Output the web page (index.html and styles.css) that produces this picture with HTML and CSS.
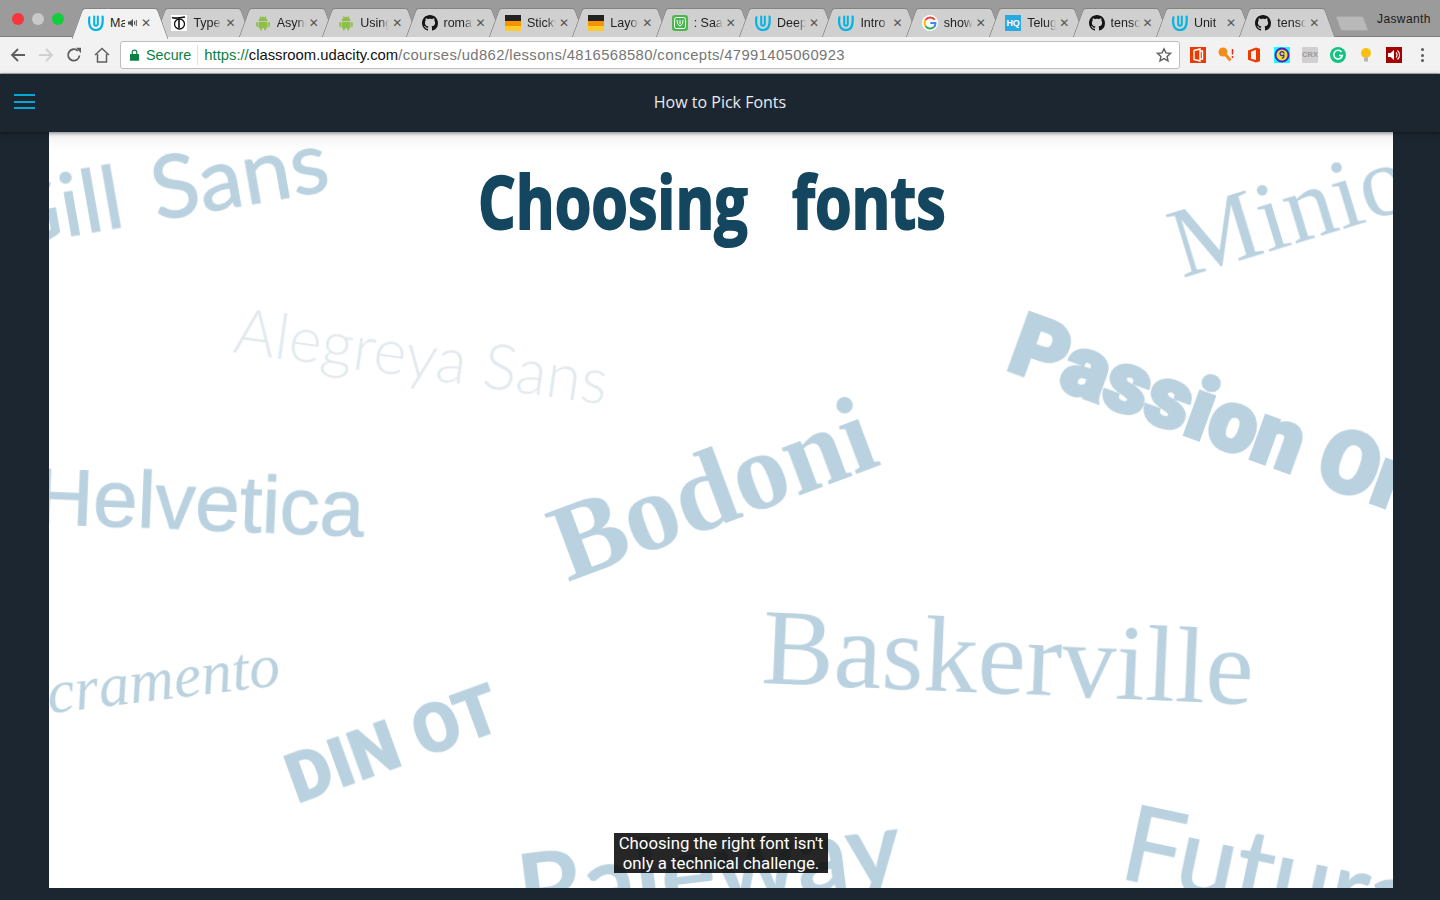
FILE: index.html
```html
<!DOCTYPE html>
<html lang="en">
<head>
  <meta charset="UTF-8">
  <title>How to Pick Fonts</title>
  <link rel="stylesheet" href="styles.css">
</head>
<body>
  <svg class="defs" width="0" height="0">
    <symbol id="udacity" viewBox="0 0 16 16">
      <path d="M1.400 2.400C.4 9 1.800 15 8 15c5.900 0 7.200-5.500 6.600-13.400" fill="none" stroke="#02b3e4" stroke-width="2.200" stroke-linecap="round"/>
      <path d="M6.200 1.400V9c0 2.200 3.400 2.200 3.600 0V1.600" fill="none" stroke="#02b3e4" stroke-width="2" stroke-linecap="round"/>
    </symbol>
    <symbol id="github" viewBox="0 0 16 16">
      <path fill="#161514" d="M8 0C3.580 0 0 3.580 0 8c0 3.540 2.290 6.530 5.470 7.590.4.070.55-.17.55-.38 0-.19-.01-.82-.01-1.490-2.010.37-2.530-.49-2.690-.94-.09-.23-.48-.94-.82-1.130-.28-.15-.68-.52-.01-.53.63-.01 1.080.58 1.230.82.72 1.210 1.870.87 2.330.66.07-.52.28-.87.51-1.070-1.780-.2-3.640-.89-3.640-3.950 0-.87.31-1.590.82-2.150-.08-.2-.36-1.020.08-2.120 0 0 .67-.21 2.200.82.64-.18 1.320-.27 2-.27.68 0 1.360.09 2 .27 1.530-1.040 2.200-.82 2.200-.82.44 1.100.16 1.920.08 2.120.51.56.82 1.270.82 2.150 0 3.070-1.870 3.750-3.650 3.950.29.25.54.73.54 1.480 0 1.070-.01 1.930-.01 2.200 0 .21.15.46.55.38A8.013 8.013 0 0 0 16 8c0-4.420-3.580-8-8-8z"/>
    </symbol>
    <symbol id="android" viewBox="0 0 16 16">
      <g fill="#8ebf4a">
        <path d="M3.500 6.200a4.500 4.500 0 0 1 9 0z"/>
        <rect x="3.500" y="6.900" width="9" height="6.300" rx="1"/>
        <rect x="1.200" y="6.900" width="1.700" height="5" rx=".85"/>
        <rect x="13.100" y="6.900" width="1.700" height="5" rx=".85"/>
        <rect x="5" y="12" width="1.800" height="3.500" rx=".9"/>
        <rect x="9.200" y="12" width="1.800" height="3.500" rx=".9"/>
      </g>
      <path d="M5 .8l1.200 2M11 .8L9.800 2.800" stroke="#8ebf4a" stroke-width=".7"/>
    </symbol>
    <symbol id="stick" viewBox="0 0 16 16">
      <rect width="16" height="6" fill="#222"/>
      <rect y="6" width="16" height="5" fill="#f59300"/>
      <rect y="11" width="16" height="5" fill="#fdcb2e"/>
    </symbol>
  </svg>

  <div class="tabstrip">
    <div class="traffic">
      <span class="light red"></span>
      <span class="light grey"></span>
      <span class="light green"></span>
    </div>
    <div class="tabs">
      <div class="tab active">
        <svg class="favicon"><use href="#udacity"/></svg>
        <span class="title short">Ma</span>
        <svg class="speaker" viewBox="0 0 10 10"><path d="M0 3.500h2L5 1v8L2 6.500H0z" fill="#555"/><path d="M6.500 3.200v3.600M8.300 2v6" stroke="#555" stroke-width="1"/></svg>
        <span class="close">✕</span>
      </div>
      <div class="tab">
        <svg class="favicon" viewBox="0 0 16 16"><rect width="16" height="16" fill="#fff"/><circle cx="8.500" cy="9" r="5" fill="none" stroke="#111" stroke-width="1.300"/><path d="M1 2.500c3 1.500 8 .5 13-.5M8 2v11" stroke="#111" stroke-width="1.600" fill="none"/></svg>
        <span class="title">Type</span>
        <span class="close">✕</span>
      </div>
      <div class="tab">
        <svg class="favicon"><use href="#android"/></svg>
        <span class="title">Async</span>
        <span class="close">✕</span>
      </div>
      <div class="tab">
        <svg class="favicon"><use href="#android"/></svg>
        <span class="title">Using</span>
        <span class="close">✕</span>
      </div>
      <div class="tab">
        <svg class="favicon"><use href="#github"/></svg>
        <span class="title">roman</span>
        <span class="close">✕</span>
      </div>
      <div class="tab">
        <svg class="favicon"><use href="#stick"/></svg>
        <span class="title">Sticky</span>
        <span class="close">✕</span>
      </div>
      <div class="tab">
        <svg class="favicon"><use href="#stick"/></svg>
        <span class="title">Layout</span>
        <span class="close">✕</span>
      </div>
      <div class="tab">
        <svg class="favicon" viewBox="0 0 16 16"><rect width="16" height="16" rx="3" fill="#4cb64f"/><rect x="2.500" y="2.500" width="11" height="11" rx="2" fill="none" stroke="#fff" stroke-width="1"/><path d="M5 5c0 3 1 5 3 6 2-1 3-3 3-6M8 5v4" fill="none" stroke="#fff" stroke-width="1"/></svg>
        <span class="title">: Saavn</span>
        <span class="close">✕</span>
      </div>
      <div class="tab">
        <svg class="favicon"><use href="#udacity"/></svg>
        <span class="title">Deep</span>
        <span class="close">✕</span>
      </div>
      <div class="tab">
        <svg class="favicon"><use href="#udacity"/></svg>
        <span class="title">Intro</span>
        <span class="close">✕</span>
      </div>
      <div class="tab">
        <svg class="favicon" viewBox="0 0 16 16"><circle cx="8" cy="8" r="8" fill="#fff"/><path d="M12.800 4.800A5.600 5.600 0 0 0 3.500 5" fill="none" stroke="#ea4335" stroke-width="2"/><path d="M3.500 5a5.600 5.600 0 0 0 0 6" fill="none" stroke="#fbbc05" stroke-width="2"/><path d="M3.500 11a5.600 5.600 0 0 0 8.500 1" fill="none" stroke="#34a853" stroke-width="2"/><path d="M12 12a5.600 5.600 0 0 0 1.500-4H8.300" fill="none" stroke="#4285f4" stroke-width="2"/></svg>
        <span class="title">show</span>
        <span class="close">✕</span>
      </div>
      <div class="tab">
        <span class="favicon hq">HQ</span>
        <span class="title">Telugu</span>
        <span class="close">✕</span>
      </div>
      <div class="tab">
        <svg class="favicon"><use href="#github"/></svg>
        <span class="title">tensor</span>
        <span class="close">✕</span>
      </div>
      <div class="tab">
        <svg class="favicon"><use href="#udacity"/></svg>
        <span class="title">Unit</span>
        <span class="close">✕</span>
      </div>
      <div class="tab">
        <svg class="favicon"><use href="#github"/></svg>
        <span class="title">tensor</span>
        <span class="close">✕</span>
      </div>
      <div class="newtab"></div>
    </div>
    <div class="profile">Jaswanth</div>
  </div>

  <div class="toolbar">
    <div class="navs">
      <svg class="nav" viewBox="0 0 16 16"><path d="M15 8H2M8 2L2 8l6 6" fill="none" stroke="#5f5f5f" stroke-width="1.800"/></svg>
      <svg class="nav" viewBox="0 0 16 16"><path d="M1 8h13M8 2l6 6-6 6" fill="none" stroke="#cfcfcf" stroke-width="1.800"/></svg>
      <svg class="nav" viewBox="0 0 16 16"><path d="M13.500 8.500A5.700 5.700 0 1 1 11.800 3.800" fill="none" stroke="#5f5f5f" stroke-width="1.800"/><path d="M10 .8h5v5.400z" fill="#5f5f5f"/></svg>
      <svg class="nav" viewBox="0 0 16 16"><path d="M1 8l7-6.500L15 8M3.500 7v8h9V7" fill="none" stroke="#5f5f5f" stroke-width="1.500"/></svg>
    </div>
    <div class="omnibox">
      <svg class="lock" viewBox="0 0 10 13"><path d="M2.500 6V3.500a2.500 2.500 0 0 1 5 0V6" fill="none" stroke="#0b8043" stroke-width="1.300"/><rect y="5.500" width="10" height="7.500" rx=".6" fill="#0b8043"/></svg>
      <span class="secure">Secure</span>
      <span class="url"><span class="scheme">https://</span><span class="host">classroom.udacity.com</span><span class="path">/courses/ud862/lessons/4816568580/concepts/47991405060923</span></span>
      <svg class="star" viewBox="0 0 16 16"><path d="M8 1.800l1.900 4.100 4.500.5-3.300 3 .9 4.400L8 11.600l-4 2.200.9-4.400-3.300-3 4.500-.5z" fill="none" stroke="#5f5f5f" stroke-width="1.400"/></svg>
    </div>
    <div class="extensions">
      <span class="ext"><svg viewBox="0 0 16 16"><rect width="16" height="16" fill="#ea3c00"/><path d="M4 3.500l6-1.500v12l-6-1.500zM10 4h2.500v8H10" fill="none" stroke="#fff" stroke-width="1.400"/></svg></span>
      <span class="ext"><svg viewBox="0 0 16 16"><circle cx="5" cy="5" r="4.500" fill="#f28c1c"/><path d="M7 7l5.500 6.500" stroke="#f28c1c" stroke-width="3"/><path d="M14.500 2v5.500M14.500 9v2" stroke="#d93025" stroke-width="1.500"/></svg></span>
      <span class="ext"><svg viewBox="0 0 16 16"><path d="M2 3.500L10 .5l4 1.200v12.600l-4 1.200-8-2.800zM5 4.800v7l5 1.200V2.800z" fill="#eb3c00" fill-rule="evenodd"/></svg></span>
      <span class="ext"><svg viewBox="0 0 16 16"><rect width="16" height="16" fill="#1ff"/><circle cx="8" cy="8" r="7.500" fill="#4b22c8"/><circle cx="8" cy="8" r="5.500" fill="#e4e22c"/><path d="M10 6.500a2 2 0 1 0-.2 1v2.500L8 11.500" fill="none" stroke="#4b22c8" stroke-width="1.300"/></svg></span>
      <span class="ext crx">CRX</span>
      <span class="ext"><svg viewBox="0 0 16 16"><circle cx="8" cy="8" r="8" fill="#12c384"/><path d="M11.500 5A4.300 4.300 0 1 0 12.300 8.500H9" fill="none" stroke="#fff" stroke-width="1.600"/></svg></span>
      <span class="ext"><svg viewBox="0 0 16 16"><circle cx="8" cy="6" r="5" fill="#fbbf12"/><rect x="6" y="10.500" width="4" height="4" fill="#b6b6b6"/></svg></span>
      <span class="ext"><svg viewBox="0 0 16 16"><rect width="16" height="16" fill="#a40000"/><path d="M2 6h2.500L8 3v10L4.500 10H2z" fill="#fff"/><path d="M10 5.500a3.500 3.500 0 0 1 0 5M11.500 3.500a6 6 0 0 1 0 9" fill="none" stroke="#fff" stroke-width="1.100"/></svg></span>
      <span class="ext dots"><i></i><i></i><i></i></span>
    </div>
  </div>

  <header class="topbar">
    <div class="burger"><span></span><span></span><span></span></div>
    <div class="lesson">How to Pick Fonts</div>
  </header>

  <main class="stage">
    <div class="video">
      <div class="word gill">Gill Sans</div>
      <div class="word minion">Minion</div>
      <div class="word alegreya">Alegreya Sans</div>
      <div class="word passion">Passion One</div>
      <div class="word helvetica">Helvetica</div>
      <div class="word bodoni">Bodoni</div>
      <div class="word baskerville">Baskerville</div>
      <div class="word sacramento">Sacramento</div>
      <div class="word din">DIN OT</div>
      <div class="word raleway">Raleway</div>
      <div class="word futura">Futura</div>
      <div class="heading">Choosing fonts</div>
      <div class="caption">Choosing the right font isn't<br>only a technical challenge.</div>
    </div>
  </main>
</body>
</html>
```

FILE: styles.css
```css
* {
  box-sizing: border-box;
  margin: 0;
  padding: 0;
}
html, body {
  height: 100%;
  overflow: hidden;
}
body {
  display: flex;
  flex-direction: column;
  font-family: "Liberation Sans", Arial, sans-serif;
  background-color: #1c2630;
}
.defs {
  position: absolute;
}

/* tab strip */
.tabstrip {
  display: flex;
  height: 37px;
  flex-shrink: 0;
  background-color: #9b9b9b;
  border-bottom: 1px solid #7f7f7f;
}
.traffic {
  display: flex;
  gap: 8px;
  width: 72px;
  flex-shrink: 0;
  padding: 13px 0 0 12px;
}
.light {
  width: 12px;
  height: 12px;
  border-radius: 50%;
}
.light.red { background-color: #f6363a; }
.light.grey { background-color: #c9c9c9; }
.light.green { background-color: #12cd3c; }
.tabs {
  position: relative;
  z-index: 0;
  display: flex;
  flex: 1;
  padding-top: 8px;
}
.tab {
  position: relative;
  display: flex;
  align-items: center;
  width: 96px;
  height: 29px;
  margin-right: -12.64px;
  padding: 0 16px 0 16px;
  flex-shrink: 0;
  font-size: 12.5px;
  color: #222;
}
.tab::before,
.tab::after {
  content: "";
  position: absolute;
  top: 0;
  bottom: 0;
  width: 50%;
  background-color: #d0d0d0;
  border-top: 1px solid #838383;
  z-index: -1;
}
.tab::before {
  left: 5px;
  border-left: 1px solid #838383;
  border-top-left-radius: 3px;
  transform: skewX(-20deg);
}
.tab::after {
  right: 5px;
  border-right: 1px solid #838383;
  border-top-right-radius: 3px;
  transform: skewX(20deg);
}
.tab.active {
  z-index: 2;
}
.tab.active::before,
.tab.active::after {
  background-color: #f2f2f2;
  height: 30px;
}
.favicon {
  width: 16px;
  height: 16px;
  flex-shrink: 0;
  margin-right: 6px;
}
.hq {
  background-color: #29a9e1;
  color: #fff;
  font-size: 9px;
  font-weight: bold;
  line-height: 16px;
  text-align: center;
}
.title {
  flex: 1;
  overflow: hidden;
  white-space: nowrap;
  -webkit-mask-image: linear-gradient(to right, #000 70%, transparent);
  mask-image: linear-gradient(to right, #000 70%, transparent);
}
.title.short {
  flex: none;
  width: 15px;
  -webkit-mask-image: none;
  mask-image: none;
}
.speaker {
  width: 10px;
  height: 10px;
  margin-left: 3px;
}
.close {
  width: 10px;
  margin-left: 3px;
  flex-shrink: 0;
  font-size: 12px;
  font-family: "DejaVu Sans", sans-serif;
  color: #555;
  text-align: center;
}
.newtab {
  width: 28px;
  height: 15px;
  margin: 8px 0 0 15px;
  background-color: #b9b9b9;
  border: 1px solid #a6a6a6;
  border-radius: 2px;
  transform: skewX(20deg);
}
.profile {
  width: 73px;
  flex-shrink: 0;
  padding: 12px 0 0 10px;
  font-size: 12px;
  letter-spacing: .4px;
  color: #1a1a1a;
}

/* toolbar */
.toolbar {
  display: flex;
  align-items: center;
  height: 37px;
  flex-shrink: 0;
  background-color: #f2f2f2;
  border-bottom: 1px solid #b5b5b5;
}
.navs {
  display: flex;
  gap: 12px;
  width: 120px;
  flex-shrink: 0;
  padding-left: 10px;
}
.nav {
  width: 16px;
  height: 16px;
}
.omnibox {
  display: flex;
  align-items: center;
  width: 1060px;
  height: 28px;
  flex-shrink: 0;
  padding: 0 7px 0 9px;
  background-color: #fff;
  border: 1px solid #bdbdbd;
  border-radius: 3px;
  font-size: 14.3px;
}
.lock {
  width: 9px;
  height: 12px;
  flex-shrink: 0;
  margin-right: 7px;
}
.secure {
  padding-right: 6px;
  margin-right: 6px;
  color: #0b8043;
  border-right: 1px solid #e2e2e2;
  line-height: 20px;
}
.url {
  flex: 1;
  font-size: 14.8px;
  color: #767676;
  white-space: nowrap;
}
.scheme { color: #0b8043; }
.host { color: #111; }
.path { letter-spacing: .39px; }
.star {
  width: 16px;
  height: 16px;
}
.extensions {
  display: flex;
  align-items: center;
  gap: 12px;
  padding-left: 10px;
}
.ext {
  display: block;
  width: 16px;
  height: 16px;
}
.ext svg {
  display: block;
  width: 16px;
  height: 16px;
}
.crx {
  background-color: #d0d0d0;
  color: #9a9a9a;
  font-size: 7.5px;
  font-weight: bold;
  line-height: 16px;
  text-align: center;
  border-radius: 1px;
}
.dots {
  display: flex;
  flex-direction: column;
  align-items: center;
  justify-content: center;
  gap: 2.5px;
}
.dots i {
  width: 3px;
  height: 3px;
  border-radius: 50%;
  background-color: #5a5a5a;
}

/* classroom header */
.topbar {
  position: relative;
  z-index: 1;
  display: flex;
  align-items: center;
  justify-content: center;
  height: 58px;
  padding-bottom: 2px;
  flex-shrink: 0;
  background-color: #1c2630;
  box-shadow: 0 1px 4px rgba(0,0,0,0.5);
}
.burger {
  position: absolute;
  left: 14px;
  top: 20px;
  display: flex;
  flex-direction: column;
  gap: 4.500px;
  width: 21px;
}
.burger span {
  height: 2px;
  background-color: #02a9d9;
}
.lesson {
  font-family: "Open Sans", sans-serif;
  font-size: 16px;
  color: #e8ebee;
}

/* video */
.stage {
  display: flex;
  justify-content: center;
  flex: 1;
  padding-left: 2px;
}
.video {
  position: relative;
  width: 1344px;
  height: 756px;
  overflow: hidden;
  background-color: #fff;
  background-image: linear-gradient(#f1f1f1, #fff 18px);
}
.word {
  position: absolute;
  line-height: 1;
  white-space: nowrap;
  color: #bad2df;
  transform-origin: 0 100%;
  filter: blur(.4px);
}
.gill {
  left: -45px;
  top: 38px;
  font-family: Lato, sans-serif;
  font-size: 88px;
  word-spacing: 8px;
  -webkit-text-stroke: 1px #bad2df;
  transform: rotate(-10deg);
}
.minion {
  left: 1138px;
  top: 62px;
  font-family: "Liberation Serif", serif;
  font-size: 100px;
  transform: rotate(-17deg);
}
.alegreya {
  left: 182px;
  top: 164px;
  font-family: Lato, sans-serif;
  font-weight: 300;
  font-size: 63px;
  color: #e3eaee;
  transform: rotate(8deg);
}
.passion {
  left: 951px;
  top: 165px;
  font-family: Roboto, sans-serif;
  font-weight: 900;
  font-size: 85px;
  -webkit-text-stroke: 4px #bad2df;
  transform: rotate(20deg);
}
.helvetica {
  left: -15px;
  top: 324px;
  font-family: "Liberation Sans", sans-serif;
  font-size: 80px;
  -webkit-text-stroke: 1px #bad2df;
  transform: rotate(2.300deg);
}
.bodoni {
  left: 525px;
  top: 357px;
  font-family: "Liberation Serif", serif;
  font-weight: bold;
  font-size: 110px;
  transform: rotate(-20.500deg);
}
.baskerville {
  left: 711px;
  top: 461px;
  font-family: "Liberation Serif", serif;
  font-size: 108px;
  transform: rotate(2.500deg);
}
.sacramento {
  left: -60px;
  top: 537px;
  font-family: "Liberation Serif", serif;
  font-style: italic;
  font-size: 62px;
  transform: rotate(-7deg);
}
.din {
  left: 252px;
  top: 614px;
  font-family: Roboto, sans-serif;
  font-weight: 900;
  font-size: 68px;
  letter-spacing: 1px;
  -webkit-text-stroke: 1px #bad2df;
  transform: rotate(-20deg);
}
.raleway {
  left: 475px;
  top: 706px;
  font-family: Lato, sans-serif;
  font-weight: bold;
  font-size: 103px;
  transform: rotate(-7deg);
}
.futura {
  left: 1066px;
  top: 652px;
  font-family: Lato, sans-serif;
  font-size: 105px;
  -webkit-text-stroke: 1.500px #bad2df;
  transform: rotate(12deg);
}
.heading {
  position: absolute;
  left: 429px;
  top: 18px;
  font-family: "Open Sans", sans-serif;
  font-weight: bold;
  font-size: 74px;
  word-spacing: 36px;
  color: #14475f;
  white-space: nowrap;
  transform: scaleX(.8);
  transform-origin: 0 50%;
  -webkit-text-stroke: 2px #14475f;
}
.caption {
  position: absolute;
  left: 565px;
  top: 701px;
  width: 214px;
  background-color: rgba(8,8,8,0.88);
  color: #fff;
  font-family: Roboto, sans-serif;
  font-size: 16.800px;
  line-height: 20px;
  text-align: center;
  white-space: nowrap;
}
```
